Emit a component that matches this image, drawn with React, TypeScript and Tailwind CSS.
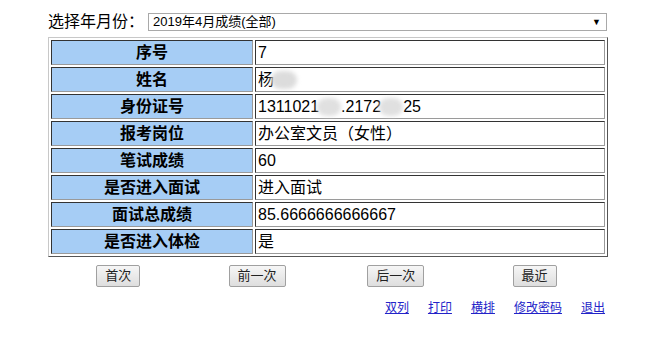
import React from "react";

const rows: { label: string; value: React.ReactNode }[] = [
  { label: "序号", value: "7" },
  {
    label: "姓名",
    value: (
      <span className="inline-flex items-center">
        杨
        <span className="inline-block w-[26px] h-[18px] -ml-[3px] rounded-full bg-[#dcdcdc] blur-[2px]" />
      </span>
    ),
  },
  {
    label: "身份证号",
    value: (
      <span className="inline-flex items-center">
        1311021
        <span className="inline-block w-[24px] h-[18px] -ml-[2px] rounded-full bg-[#e0e0e0] blur-[2px]" />
        .2172
        <span className="inline-block w-[24px] h-[18px] -ml-[2px] rounded-full bg-[#e0e0e0] blur-[2px]" />
        25
      </span>
    ),
  },
  { label: "报考岗位", value: "办公室文员（女性）" },
  { label: "笔试成绩", value: "60" },
  { label: "是否进入面试", value: "进入面试" },
  { label: "面试总成绩", value: "85.6666666666667" },
  { label: "是否进入体检", value: "是" },
];

const buttons = ["首次", "前一次", "后一次", "最近"];
const links = ["双列", "打印", "横排", "修改密码", "退出"];

export default function App() {
  return (
    <div className="w-[651px] h-[344px] bg-white text-black font-['Liberation_Sans','Noto_Sans_CJK_SC',sans-serif]">
      <div className="flex items-center pt-[13px] pl-[48px]">
        <span className="text-[16px] leading-[18px] w-[100px]">选择年月份：</span>
        <div className="flex items-center justify-between w-[459px] h-[18px] border border-[#a9a9a9] bg-white pl-[4px] pr-[5px]">
          <span className="text-[13px] leading-[16px]">2019年4月成绩(全部)</span>
          <span className="text-[9px] leading-[10px]">▼</span>
        </div>
      </div>

      <table className="ml-[48px] mt-[6px] w-[560px] border-separate border-spacing-[2px] border border-t-[#c8c8c8] border-l-[#c8c8c8] border-r-[#555] border-b-[#555] text-[16px]">
        <tbody>
          {rows.map((r) => (
            <tr key={r.label}>
              <td className="w-[202px] h-[25px] p-0 bg-[#a6cdf5] text-center font-bold leading-[23px] border border-t-[#333] border-l-[#333] border-r-[#9a9a9a] border-b-[#9a9a9a]">
                {r.label}
              </td>
              <td className="h-[25px] p-0 pl-[2px] bg-white leading-[23px] border border-t-[#333] border-l-[#333] border-r-[#9a9a9a] border-b-[#9a9a9a]">
                {r.value}
              </td>
            </tr>
          ))}
        </tbody>
      </table>

      <div className="grid grid-cols-4 w-[555px] ml-[49px] mt-[8px]">
        {buttons.map((b) => (
          <div key={b} className="flex justify-center">
            <button className="h-[22px] px-[8px] text-[13px] leading-[20px] text-[#222] border border-[#a0a0a0] rounded-[2px] bg-gradient-to-b from-[#f6f6f6] to-[#dedede]">
              {b}
            </button>
          </div>
        ))}
      </div>

      <div className="flex justify-end gap-[19px] pr-[46px] mt-[14px]">
        {links.map((l) => (
          <a key={l} href="#" className="text-[12px] leading-[14px] text-[#2323c8] underline">
            {l}
          </a>
        ))}
      </div>
    </div>
  );
}
